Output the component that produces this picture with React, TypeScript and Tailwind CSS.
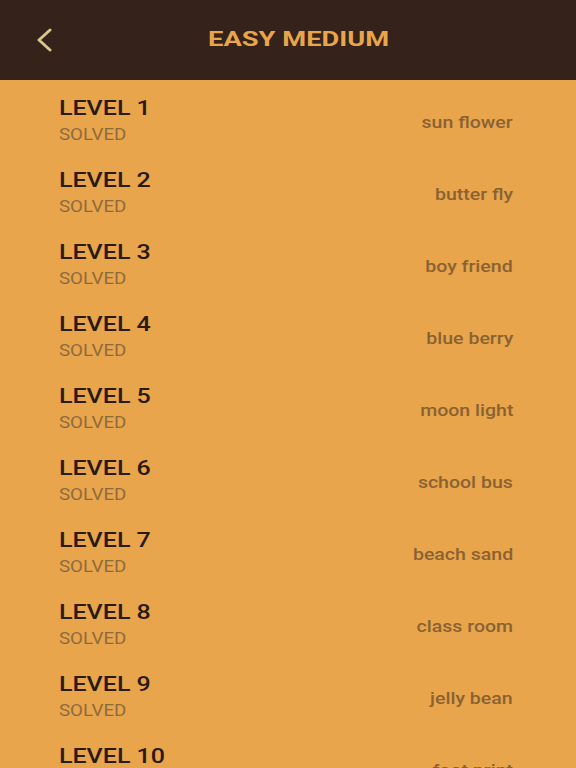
const levels = [
  "sun flower",
  "butter fly",
  "boy friend",
  "blue berry",
  "moon light",
  "school bus",
  "beach sand",
  "class room",
  "jelly bean",
  "foot print",
];

function BackIcon() {
  return (
    <svg width="20" height="24" viewBox="0 0 20 24" fill="none">
      <path d="M15 2 L4 12 L15 22" stroke="#d6c68c" strokeWidth="3" strokeLinecap="round" strokeLinejoin="round" />
    </svg>
  );
}

export default function App() {
  return (
    <div className="w-[576px] h-[768px] overflow-hidden bg-[#e8a54c] font-['Roboto',sans-serif]">
      <div className="relative h-[80px] bg-[#35221b] flex items-center justify-center">
        <button className="absolute left-[35px] top-[28px]">
          <BackIcon />
        </button>
        <h1 className="ml-[21px] text-[21px] font-bold text-[#e8a54c] scale-x-[1.3]">EASY MEDIUM</h1>
      </div>
      <div className="pt-[4px]">
        {levels.map((word, i) => (
          <div key={word} className="h-[72px] flex items-center justify-between pl-[59px] pr-[63px]">
            <div className="flex flex-col gap-[5px]">
              <div className="text-[20px] leading-[24px] font-medium text-[#2a1a12] origin-left scale-x-[1.25]">
                LEVEL {i + 1}
              </div>
              <div className="text-[16px] leading-[20px] text-[#8d6a3c] origin-left scale-x-[1.17]">SOLVED</div>
            </div>
            <div className="mt-[6px] text-[16px] font-medium text-[#8a6232] origin-right scale-x-[1.22]">{word}</div>
          </div>
        ))}
      </div>
    </div>
  );
}
